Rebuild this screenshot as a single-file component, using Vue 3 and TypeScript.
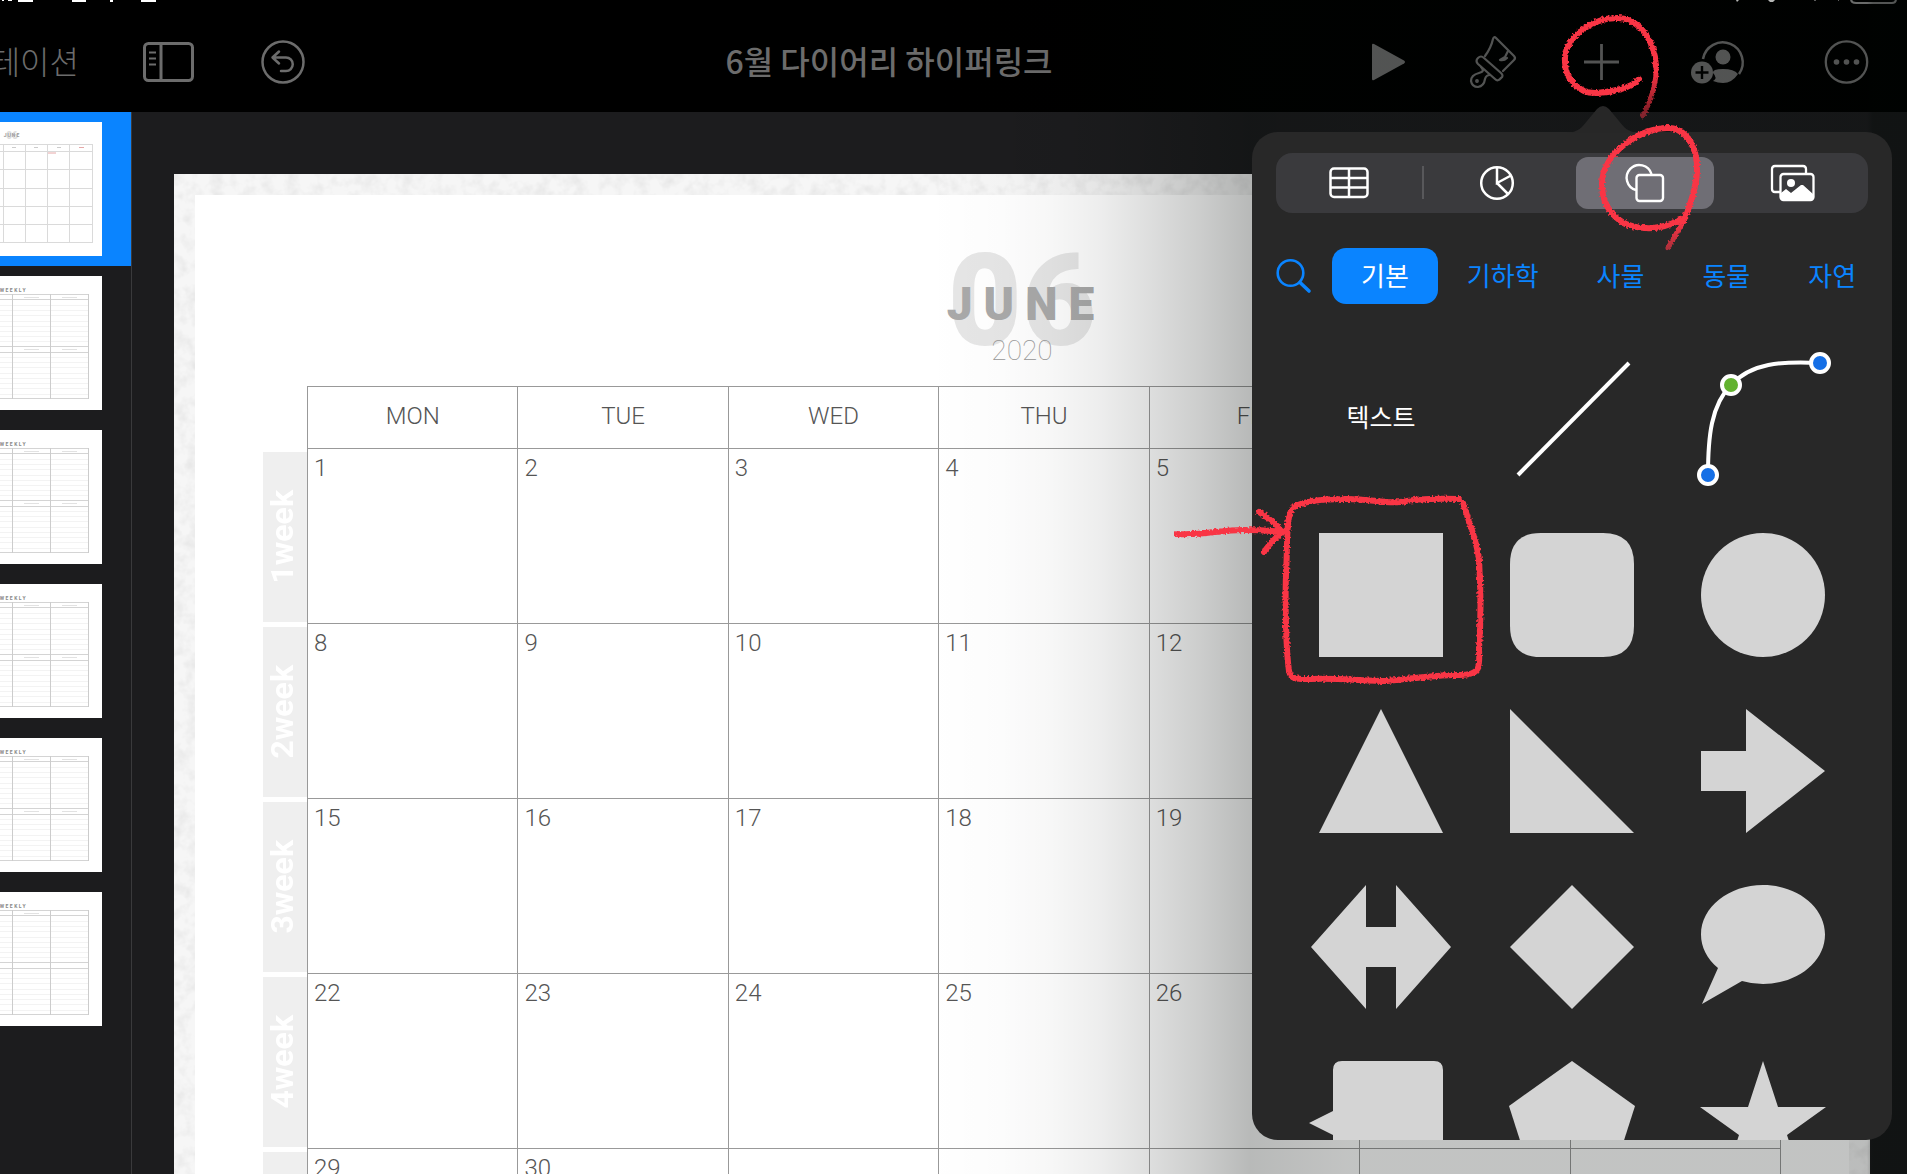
<script setup lang="ts">
interface Week {
  label: string
  days: string[]
}

const weekdays: string[] = ['MON', 'TUE', 'WED', 'THU', 'FRI', 'SAT', 'SUN']

const weeks: Week[] = Array.from({ length: 5 }, (_, row) => ({
  label: `${row + 1}week`,
  days: Array.from({ length: 7 }, (_, col) => {
    const day = row * 7 + col + 1
    return day <= 30 ? String(day) : ''
  }),
}))

const weeklyPages: number[] = [1, 2, 3, 4, 5]
const ruleLines: number[] = [29, 34, 39, 45, 50, 55, 60, 65, 81, 86, 91, 97, 102, 107, 112, 118]

const categories: string[] = ['기본', '기하학', '사물', '동물', '자연']

const shapes: { name: string; path: string }[] = [
  { name: 'square', path: 'M0 0H124V124H0Z' },
  { name: 'rounded square', path: 'M31 0H93Q124 0 124 31V93Q124 124 93 124H31Q0 124 0 93V31Q0 0 31 0Z' },
  { name: 'circle', path: 'M62 0A62 62 0 1 1 62 124A62 62 0 1 1 62 0Z' },
  { name: 'triangle', path: 'M62 0L124 124H0Z' },
  { name: 'right triangle', path: 'M0 0L124 124H0Z' },
  { name: 'arrow', path: 'M0 42H45V0L124 62L45 124V82H0Z' },
  { name: 'double arrow', path: 'M-8 62L47 0V42H77V0L132 62L77 124V82H47V124Z' },
  { name: 'diamond', path: 'M62 0L124 62L62 124L0 62Z' },
  { name: 'speech bubble', path: 'M17 83C6 74 0 62 0 49.500C0 22 28 0 62 0S124 22 124 49.500S96 99 62 99Q51 99 41 96L1 119Z' },
  { name: 'callout', path: 'M23 0H115Q124 0 124 9V124H14V74L-10 62L14 50V9Q14 0 23 0Z' },
  { name: 'pentagon', path: 'M62 0L125 45L101 120H23L-1 45Z' },
  { name: 'star', path: 'M62 0L77 46H125L86 74L101 120L62 92L23 120L38 74L-1 46H47Z' },
]
</script>

<template>
  <div class="app">
    <header class="toolbar">
      <svg class="status-left" viewBox="0 0 160 3" width="160" height="3" aria-hidden="true">
        <path d="M2 0h2v1h-2zM8 0h4v1h-4zM18 0h15v2h-15zM72 0h14v2h-14zM110 0h3v2h-3zM141 0h15v2h-15z" fill="#fff" />
      </svg>
      <svg class="status-right" viewBox="0 0 170 5" width="170" height="5" aria-hidden="true">
        <path d="M8 0h3l-2 2zM40 0h7l-2 2h-3z" fill="#eee" />
        <path d="M86 0h2v1h-2zM110 0h1v1h-1z" fill="#777" />
        <path d="M123 -6V-1Q123 3 128 3H164Q168 3 168 -1V-6" fill="none" stroke="#8a8a8a" stroke-width="2" />
      </svg>

      <div class="tools-left">
        <button class="back" type="button">테이션</button>
        <button type="button" aria-label="Sidebar">
          <svg width="52" height="42" viewBox="0 0 52 42" fill="none" stroke="currentColor">
            <rect x="1.500" y="2.500" width="48" height="37" rx="4" stroke-width="3" />
            <path d="M18 2V40" stroke-width="3" />
            <path d="M6 11.500H13M6 17.500H13M6 23.500H13" stroke-width="2" />
          </svg>
        </button>
        <button type="button" aria-label="Undo">
          <svg width="48" height="44" viewBox="-2 0 48 44" fill="none" stroke="currentColor" stroke-linecap="round" stroke-linejoin="round">
            <circle cx="22" cy="22" r="20.500" stroke-width="2.500" />
            <path d="M18 11.500L11.500 17.500L18 23.500M12 17.500H25A6.500 6.500 0 0 1 25 31H20" stroke-width="2.500" />
          </svg>
        </button>
      </div>

      <h1 class="doc-title">6월 다이어리 하이퍼링크</h1>

      <div class="tools-right">
        <button type="button" aria-label="Play">
          <svg width="33" height="38" viewBox="0 0 33 38"><path d="M0 2Q0 0 2 1L32 17.500Q34 19 32 20.500L2 37Q0 38 0 36Z" fill="currentColor" /></svg>
        </button>
        <button type="button" aria-label="Format">
          <svg width="48" height="52" viewBox="0 0 48 52" fill="none" stroke="currentColor" stroke-width="2.200" stroke-linecap="round" stroke-linejoin="round">
            <path d="M16 20Q22 12 24 3Q25 0 27 2L45 20Q47 22 45 24L34 35" />
            <path d="M9 22Q12 19 15 22L32 37Q35 40 32 42Q29 46 26 43L9 28Q6 25 9 22Z" />
            <path d="M12 31L14 34Q14 36 10 37Q2 39 2 45Q3 51 9 51Q15 50 16 43Q17 39 21 39" />
            <path d="M39 15L36 21L31 24Q35 25 38 22" />
            <circle cx="8" cy="45" r="0.800" />
          </svg>
        </button>
        <button type="button" aria-label="Insert">
          <svg width="41" height="36" viewBox="0 0 41 36" fill="none" stroke="currentColor" stroke-width="2.800"><path d="M3 18H38M20.500 0V36" /></svg>
        </button>
        <button type="button" aria-label="Collaborate">
          <svg width="63" height="44" viewBox="0 0 63 44">
            <path d="M17 19A20 20 0 1 1 53 34" fill="none" stroke="currentColor" stroke-width="2.500" />
            <circle cx="37" cy="17" r="7.500" fill="currentColor" />
            <path d="M27 41Q32 38 27 33Q26 29 37 29Q48 29 52 34Q46 43 37 43Q32 43 27 41Z" fill="currentColor" />
            <circle cx="16" cy="32.500" r="11" fill="currentColor" />
            <path d="M9.500 32.500H22.500M16 26V39" stroke="#000" stroke-width="2.400" />
          </svg>
        </button>
        <button type="button" aria-label="More">
          <svg width="67" height="44" viewBox="0 0 67 44">
            <circle cx="33.500" cy="22" r="20.700" fill="none" stroke="currentColor" stroke-width="2.300" />
            <g fill="currentColor"><circle cx="23.500" cy="22" r="2.800" /><circle cx="33.500" cy="22" r="2.800" /><circle cx="43.500" cy="22" r="2.800" /></g>
          </svg>
        </button>
      </div>
    </header>

    <main class="workspace">
      <nav class="navigator" aria-label="Slides">
        <button class="page selected" type="button" aria-label="June">
          <svg class="thumb" width="102" height="134" viewBox="0 0 102 134">
            <rect width="102" height="134" fill="#fff" />
            <text x="12" y="17" font-size="10" font-weight="900" fill="#ddd" text-anchor="middle">06</text>
            <text x="12" y="15" font-size="5" font-weight="700" fill="#999" text-anchor="middle" letter-spacing="1">JUNE</text>
            <g fill="none" stroke="#dadada">
              <path d="M0 22.500H92.500M0 29.500H92.500M0 47.500H92.500M0 66.500H92.500M0 84.500H92.500M0 102.500H92.500M0 120.500H92.500" />
              <path d="M3.500 22V121M25.500 22V121M47.500 22V121M69.500 22V121M92.500 22V121" />
            </g>
            <path d="M12 25.500h4M34 25.500h4M57 25.500h4" stroke="#ccc" />
            <path d="M79 25.500h5M48 31h8" stroke="#e6a8a8" />
          </svg>
        </button>
        <button v-for="page in weeklyPages" :key="page" class="page" type="button" :aria-label="`Weekly ${page}`">
          <svg class="thumb" width="102" height="134" viewBox="0 0 102 134">
            <rect width="102" height="134" fill="#fff" />
            <text x="27" y="16" font-size="5" font-weight="700" fill="#888" text-anchor="end" letter-spacing="1.500">WEEKLY</text>
            <path v-for="y in ruleLines" :key="y" :d="`M0 ${y}.5H88`" stroke="#f3f3f3" />
            <g fill="none" stroke="#ccc">
              <path d="M0 18.500H88.500M0 23.500H88.500M0 70.500H88.500M0 76.500H88.500M0 122.500H88.500" stroke="#d4d4d4" />
              <path d="M12.500 18V123M50.500 18V123M88.500 18V123" />
            </g>
            <path v-if="page < 5" d="M24 21.500h15M62 21.500h15M24 73.500h15M62 73.500h15" stroke="#e2e2e2" />
            <path v-else d="M24 21.500h15" stroke="#e2e2e2" />
          </svg>
        </button>
      </nav>

      <section class="canvas">
        <article class="slide">
          <svg class="paper" width="100%" height="100%" aria-hidden="true">
            <filter id="grain" x="0" y="0" width="100%" height="100%" color-interpolation-filters="sRGB">
              <feTurbulence type="fractalNoise" baseFrequency="0.08" numOctaves="3" seed="4" />
              <feColorMatrix values="0 0 0 0 0.5  0 0 0 0 0.5  0 0 0 0 0.5  0.25 0 0 0 -0.1" />
            </filter>
            <rect width="100%" height="100%" fill="#f6f6f6" />
            <rect width="100%" height="100%" filter="url(#grain)" />
          </svg>
          <div class="sheet">
            <div class="masthead">
              <span class="month-number">06</span>
              <span class="month-name">JUNE</span>
              <span class="year">2020</span>
            </div>
            <table class="calendar">
              <colgroup>
                <col class="week-col" />
                <col v-for="name in weekdays" :key="name" />
              </colgroup>
              <thead>
                <tr>
                  <td class="corner"></td>
                  <th v-for="name in weekdays" :key="name" scope="col">{{ name }}</th>
                </tr>
              </thead>
              <tbody>
                <tr v-for="week in weeks" :key="week.label">
                  <th class="week" scope="row"><span>{{ week.label }}</span></th>
                  <td v-for="(day, i) in week.days" :key="i" class="day">{{ day }}</td>
                </tr>
              </tbody>
            </table>
          </div>
        </article>
      </section>
    </main>

    <div class="shade"></div>

    <aside class="popover">
      <svg class="pointer" width="72" height="27" viewBox="0 0 72 27" aria-hidden="true">
        <path d="M0 27C12 26 15 21 20 15L30 3Q36 -3 42 3L52 15C57 21 60 26 72 27Z" fill="#272727" />
      </svg>
      <div class="panel">
        <div class="segments">
          <button type="button" class="split" aria-label="Tables">
            <svg width="40" height="32" viewBox="0 0 40 32" fill="none" stroke="#fff" stroke-width="2.500">
              <rect x="1.500" y="1.500" width="37" height="28.500" rx="3.500" />
              <path d="M20 1V30M1 11H39M1 20.500H39" />
            </svg>
          </button>
          <button type="button" aria-label="Charts">
            <svg width="36" height="36" viewBox="0 0 36 36" fill="none" stroke="#fff" stroke-width="2.500">
              <circle cx="18" cy="18" r="15.800" />
              <path d="M18 2V18L32 10.500M18 18L29 29" />
            </svg>
          </button>
          <button type="button" class="active" aria-label="Shapes">
            <svg width="40" height="40" viewBox="0 0 40 40" fill="none" stroke="#fff" stroke-width="2.400">
              <path d="M11 27A12.700 12.700 0 1 1 26.500 11" />
              <rect x="11.500" y="12" width="26.500" height="26" rx="3" />
            </svg>
          </button>
          <button type="button" aria-label="Media">
            <svg width="46" height="38" viewBox="0 0 46 38" fill="none" stroke="#fff" stroke-width="2.300">
              <path d="M36 9V5Q36 2 33 2H5Q2 2 2 5V25Q2 28 5 28H10" />
              <rect x="10.500" y="10" width="33" height="26" rx="3" />
              <circle cx="21" cy="19" r="4" fill="#fff" stroke="none" />
              <path d="M11 29L16 25L21 29L31 21L33 21L43 30V36H11Z" fill="#fff" stroke="none" />
            </svg>
          </button>
        </div>

        <div class="categories">
          <button type="button" class="search" aria-label="Search">
            <svg width="36" height="36" viewBox="0 0 36 36" fill="none" stroke="currentColor" stroke-linecap="round">
              <circle cx="14.500" cy="15" r="12.800" stroke-width="2.600" />
              <path d="M24 24.500L33 33" stroke-width="3.600" />
            </svg>
          </button>
          <button
            v-for="(name, i) in categories"
            :key="name"
            type="button"
            class="category"
            :class="{ current: i === 0 }"
          >{{ name }}</button>
        </div>

        <div class="shapes">
          <button type="button" class="text-shape">텍스트</button>
          <button type="button" aria-label="line">
            <svg width="124" height="124" viewBox="0 0 124 124"><path d="M8 118L119 6" stroke="#fff" stroke-width="4" /></svg>
          </button>
          <button type="button" aria-label="curve">
            <svg width="124" height="124" viewBox="0 0 124 124">
              <path d="M7 118C7 80 10 48 30 28C50 6 80 4 119 6" fill="none" stroke="#fff" stroke-width="4" />
              <g stroke="#fff" stroke-width="4">
                <circle cx="7" cy="118" r="9" fill="#156fe6" />
                <circle cx="30" cy="28" r="9" fill="#62b22f" />
                <circle cx="119" cy="6" r="9" fill="#156fe6" />
              </g>
            </svg>
          </button>
          <button v-for="shape in shapes" :key="shape.name" type="button" :aria-label="shape.name">
            <svg width="124" height="124" viewBox="0 0 124 124"><path :d="shape.path" fill="#d4d4d4" /></svg>
          </button>
        </div>
      </div>
    </aside>

    <svg class="ink" width="760" height="700" viewBox="1147 0 760 700" aria-hidden="true">
      <defs>
        <filter id="crayon" filterUnits="userSpaceOnUse" x="1147" y="0" width="760" height="700">
          <feTurbulence type="fractalNoise" baseFrequency="0.5" numOctaves="2" seed="2" result="n" />
          <feDisplacementMap in="SourceGraphic" in2="n" scale="4" xChannelSelector="R" yChannelSelector="G" />
        </filter>
        <linearGradient id="fade1" gradientUnits="userSpaceOnUse" x1="0" y1="72" x2="0" y2="118">
          <stop offset="0" stop-color="#f93445" /><stop offset="1" stop-color="#f93445" stop-opacity="0.450" />
        </linearGradient>
        <linearGradient id="fade2" gradientUnits="userSpaceOnUse" x1="0" y1="222" x2="0" y2="252">
          <stop offset="0" stop-color="#f93445" /><stop offset="1" stop-color="#f93445" stop-opacity="0.600" />
        </linearGradient>
      </defs>
      <g fill="none" stroke="#f93445" stroke-width="6" stroke-linecap="round" stroke-linejoin="round" filter="url(#crayon)">
        <path d="M1639 79C1632 88 1612 92 1597 93C1578 94 1565 78 1565 62C1563 38 1592 18 1617 18C1640 18 1655 42 1656 66" />
        <path d="M1656 66C1657 82 1651 100 1643 116" stroke="url(#fade1)" stroke-width="5" />
        <path d="M1680 220C1668 226 1658 229 1645 228C1616 227 1602 206 1602 185C1601 152 1644 126 1670 128C1690 130 1698 153 1697 172C1696 190 1690 206 1683 222" />
        <path d="M1683 222L1668 248" stroke="url(#fade2)" stroke-width="5" />
        <path d="M1459 499C1430 498 1415 499 1400 502C1385 504 1365 498 1343 499C1320 499 1304 501 1294 507C1285 514 1288 545 1286 573C1285 605 1286 650 1289 671C1291 680 1298 679 1310 679C1340 678 1365 681 1387 681C1410 679 1440 674 1460 675C1480 675 1480 668 1479 650C1481 620 1481 590 1479 560C1477 540 1468 520 1463 503" />
        <path d="M1177 534C1200 536 1225 529 1246 530Q1265 530 1283 532M1259 512Q1275 522 1283 532Q1272 540 1264 552" />
      </g>
    </svg>
  </div>
</template>

<style>
body {
  margin: 0;
  background: #1c1c1e;
}
</style>

<style scoped>
.app {
  position: relative;
  display: flex;
  flex-direction: column;
  height: 100vh;
  overflow: hidden;
  background: #1c1c1e;
  font-family: Roboto, "Noto Sans CJK KR", sans-serif;
}

button {
  display: flex;
  align-items: center;
  justify-content: center;
  padding: 0;
  border: 0;
  background: none;
  color: inherit;
  font: inherit;
}

svg {
  display: block;
  overflow: visible;
}

/* Toolbar */
.toolbar {
  position: relative;
  flex: none;
  display: grid;
  grid-template-columns: 406px 1fr auto;
  align-items: center;
  height: 112px;
  box-sizing: border-box;
  padding: 12px 27px 0 0;
  background: #000;
  color: #6c6c6c;
}

.status-left,
.status-right {
  position: absolute;
  top: 0;
  overflow: hidden;
}

.status-left {
  left: 0;
}

.status-right {
  right: 9px;
}

.tools-left {
  display: flex;
  align-items: center;
  gap: 64px;
}

.back {
  width: 79px;
  justify-content: flex-end;
  overflow: hidden;
  padding-bottom: 4px;
  font-family: "Noto Sans CJK KR", sans-serif;
  font-size: 32px;
  font-weight: 300;
  line-height: 48px;
  white-space: nowrap;
}

.doc-title {
  margin: 0;
  padding-bottom: 4px;
  text-align: center;
  font-family: "Noto Sans CJK KR", sans-serif;
  font-size: 32px;
  font-weight: 500;
  line-height: 48px;
}

.tools-right {
  display: flex;
  align-items: center;
  gap: 64px;
}

/* Slide navigator */
.workspace {
  flex: 1;
  display: flex;
  min-height: 0;
}

.navigator {
  flex: none;
  width: 131px;
  border-right: 1px solid #3a3a3c;
}

.page {
  width: 100%;
  justify-content: flex-start;
  padding: 10px 0;
}

.page.selected {
  background: #0a84ff;
}

.thumb {
  overflow: hidden;
}

/* Slide */
.canvas {
  flex: 1;
  min-width: 0;
  overflow: hidden;
  padding: 62px 37px 0 42px;
}

.slide {
  position: relative;
  padding: 21px;
}

.paper {
  position: absolute;
  inset: 0;
}

.sheet {
  position: relative;
  padding: 0 68px 60px;
  background: #fff;
}

.masthead {
  position: relative;
  height: 191px;
  box-sizing: border-box;
  padding-top: 42px;
  text-align: center;
}

.month-number {
  display: block;
  color: #e6e6e6;
  font-size: 128px;
  font-weight: 900;
  line-height: 128px;
}

.month-name,
.year {
  position: absolute;
  left: 0;
  right: 0;
}

.month-name {
  top: 86px;
  padding-left: 8px;
  color: #a9a9a9;
  font-size: 46px;
  font-weight: 900;
  line-height: 46px;
  letter-spacing: 11px;
}

.year {
  top: 142px;
  color: #999;
  font-size: 28px;
  font-weight: 100;
  line-height: 28px;
}

.calendar {
  width: 100%;
  table-layout: fixed;
  border-collapse: separate;
  border-spacing: 0;
  color: #555;
  font-size: 24px;
  font-weight: 300;
  line-height: 28px;
}

.week-col {
  width: 45px;
}

.calendar thead tr {
  height: 63px;
}

.calendar tbody tr {
  height: 175px;
}

.calendar th,
.calendar td {
  box-sizing: border-box;
  padding: 0;
  border: 0 solid #999;
  border-width: 0 1px 1px 0;
  font-weight: 300;
}

.calendar thead th {
  padding-bottom: 4px;
  border-top-width: 1px;
}

.calendar .corner {
  border-bottom: 0;
}

.calendar .day {
  padding: 5px 6px;
  vertical-align: top;
}

.calendar .week {
  padding: 8px 6px 0 0;
  border-bottom: 0;
  background: linear-gradient(#efefef, #efefef) 0 3px / 100% calc(100% - 5px) no-repeat;
  color: #fff;
  font-size: 32px;
  font-weight: 700;
  line-height: 36px;
}

.week span {
  display: inline-block;
  writing-mode: vertical-rl;
  transform: rotate(180deg);
}

/* Dimming around the open popover */
.shade {
  position: absolute;
  top: 0;
  right: 0;
  bottom: 0;
  width: 980px;
  background: linear-gradient(
    90deg,
    rgba(0, 6, 3, 0) 0,
    rgba(0, 6, 3, 0.01) 73px,
    rgba(0, 6, 3, 0.03) 123px,
    rgba(0, 6, 3, 0.07) 173px,
    rgba(0, 6, 3, 0.13) 221px,
    rgba(0, 6, 3, 0.2) 273px,
    rgba(0, 6, 3, 0.28) 323px,
    rgba(0, 6, 3, 0.24) 420px,
    rgba(0, 6, 3, 0.24) 940px,
    rgba(0, 6, 3, 0.4) 946px
  );
  pointer-events: none;
}

/* Popover */
.popover {
  position: absolute;
  top: 132px;
  right: 15px;
  bottom: 34px;
  width: 640px;
}

.pointer {
  position: absolute;
  top: -26px;
  left: 315px;
}

.panel {
  display: flex;
  flex-direction: column;
  height: 100%;
  box-sizing: border-box;
  overflow: hidden;
  padding: 21px 24px 0;
  border-radius: 26px;
  background: #282828;
}

.segments {
  flex: none;
  display: flex;
  height: 60px;
  border-radius: 16px;
  background: #3a3a3d;
}

.segments button {
  position: relative;
  flex: 1;
  margin: 4px 6px 4px 4px;
  border-radius: 12px;
}

.segments .active {
  background: #6f6e75;
}

.segments .split::after {
  content: "";
  position: absolute;
  top: 9px;
  right: -6px;
  width: 2px;
  height: 33px;
  background: #58585b;
}

.categories {
  flex: none;
  display: flex;
  height: 56px;
  margin-top: 35px;
  color: #0a84ff;
  font-family: "Noto Sans CJK KR", sans-serif;
  font-size: 26px;
  white-space: nowrap;
}

.search {
  margin-right: 20px;
}

.category {
  padding: 0 29px 4px;
  border-radius: 14px;
}

.category.current {
  background: #0a84ff;
  color: #fff;
}

.shapes {
  display: grid;
  grid-template-columns: repeat(3, 191px);
  grid-auto-rows: 176px;
  justify-content: center;
  margin-top: 27px;
}

.text-shape {
  padding-bottom: 6px;
  color: #fff;
  font-family: "Noto Sans CJK KR", sans-serif;
  font-size: 25px;
}

/* Hand-drawn marks */
.ink {
  position: absolute;
  top: 0;
  right: 0;
  pointer-events: none;
}
</style>
